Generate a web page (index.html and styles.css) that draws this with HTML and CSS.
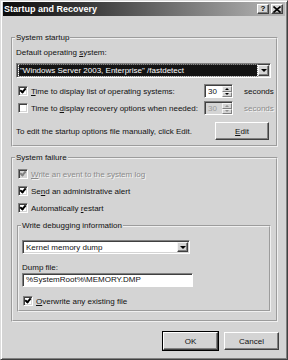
FILE: index.html
```html
<!DOCTYPE html>
<html lang="en">
<head>
<meta charset="UTF-8">
<title>Startup and Recovery</title>
<link rel="stylesheet" href="styles.css">
</head>
<body>
<div class="window">
  <div class="titlebar">
    <span class="title">Startup and Recovery</span>
    <div class="caption-buttons">
      <span class="cbtn help">?</span>
      <span class="cbtn close">
        <svg width="8" height="7" viewBox="0 0 8 7"><path d="M0.5 0.5 L7.5 6.5 M7.5 0.5 L0.5 6.5" stroke="#000" stroke-width="1.6"/></svg>
      </span>
    </div>
  </div>

  <div class="content">
    <fieldset class="group startup">
      <legend>System startup</legend>
      <div class="label">Default operating <u>s</u>ystem:</div>
      <div class="combo">
        <div class="combo-field"><span class="selected">"Windows Server 2003, Enterprise" /fastdetect</span></div>
        <span class="drop"><i class="arrow"></i></span>
      </div>

      <div class="spin-row first">
        <div class="check-item">
          <span class="checkbox checked"></span>
          <span><u>T</u>ime to display list of operating systems:</span>
        </div>
        <div class="spinner">
          <span class="spin-value">30</span>
          <span class="spin-arrows"><span class="up"><i></i></span><span class="down"><i></i></span></span>
        </div>
        <span class="unit">seconds</span>
      </div>

      <div class="spin-row second">
        <div class="check-item">
          <span class="checkbox"></span>
          <span>Time to <u>d</u>isplay recovery options when needed:</span>
        </div>
        <div class="spinner disabled">
          <span class="spin-value">30</span>
          <span class="spin-arrows"><span class="up"><i></i></span><span class="down"><i></i></span></span>
        </div>
        <span class="unit disabled-text">seconds</span>
      </div>

      <div class="edit-row">
        <span>To edit the startup options file manually, click Edit.</span>
        <button class="btn edit"><u>E</u>dit</button>
      </div>
    </fieldset>

    <fieldset class="group failure">
      <legend>System failure</legend>
      <div class="check-item row">
        <span class="checkbox checked disabled"></span>
        <span class="disabled-text"><u>W</u>rite an event to the system log</span>
      </div>
      <div class="check-item row">
        <span class="checkbox checked"></span>
        <span>Se<u>n</u>d an administrative alert</span>
      </div>
      <div class="check-item row">
        <span class="checkbox checked"></span>
        <span>Automatically <u>r</u>estart</span>
      </div>

      <fieldset class="group debug">
        <legend>Write debugging information</legend>
        <div class="combo small">
          <div class="combo-field"><span class="plain">Kernel memory dump</span></div>
          <span class="drop"><i class="arrow"></i></span>
        </div>
        <div class="label dump-label">Dump file:</div>
        <div class="textbox">%SystemRoot%\MEMORY.DMP</div>
        <div class="check-item row overwrite">
          <span class="checkbox checked"></span>
          <span><u>O</u>verwrite any existing file</span>
        </div>
      </fieldset>
    </fieldset>

    <div class="buttons">
      <button class="btn default">OK</button>
      <button class="btn">Cancel</button>
    </div>
  </div>
</div>
</body>
</html>
```

FILE: styles.css
```css
body {
    margin: 0;
    background: #fff;
    font-family: "Liberation Sans", Arial, sans-serif;
    font-size: 8px;
    line-height: 13px;
    color: #111;
}

.window {
    width: 288px;
    height: 360px;
    box-sizing: border-box;
    background: #d4d4d4;
    border: 1px solid;
    border-color: #dcdcdc #404040 #404040 #dcdcdc;
    box-shadow: inset 1px 1px 0 #fff, inset -1px -1px 0 #808080;
    padding: 1px 2px 2px 2px;
}

.titlebar {
    height: 14px;
    display: flex;
    align-items: center;
    background: linear-gradient(to right, #0c0c0c, #3a3a3a 30%, #b8b8b8);
    color: #fff;
    padding-left: 1px;
}

.title {
    font-weight: bold;
    font-size: 9px;
    flex: 1;
}

.caption-buttons {
    display: flex;
    gap: 2px;
    margin-right: 2px;
}

.cbtn {
    width: 12px;
    height: 10px;
    box-sizing: border-box;
    background: #d4d4d4;
    border: 1px solid;
    border-color: #fff #404040 #404040 #fff;
    box-shadow: inset -1px -1px 0 #808080;
    color: #000;
    display: flex;
    align-items: center;
    justify-content: center;
    font-weight: bold;
    font-size: 8px;
    line-height: 8px;
}

.content {
    padding: 0 7px 0 8px;
    display: flex;
    flex-direction: column;
}

.group {
    margin: 0;
    padding: 0 5px 5px 3px;
    border: 2px groove #f0f0f0;
    min-width: 0;
}

.group legend {
    padding: 0 1px;
    margin-left: -1px;
    line-height: 13px;
}

.startup {
    margin-top: 15px;
}

.failure {
    margin-top: 4px;
    padding-bottom: 8px;
}

.debug {
    margin: 4px 0 0 1px;
    padding: 0 5px 2px 3px;
}

.label {
    margin-top: 2px;
}

/* combo boxes */
.combo {
    display: flex;
    height: 15px;
    margin-top: 4px;
    box-sizing: border-box;
    background: #fff;
    border: 1px solid;
    border-color: #808080 #fff #fff #808080;
    box-shadow: inset 1px 1px 0 #404040, inset -1px -1px 0 #d4d4d4;
    padding: 1px;
}

.combo-field {
    flex: 1;
    display: flex;
    align-items: center;
    padding: 0 1px;
    line-height: 11px;
}

.selected {
    flex: 1;
    background: #141414;
    color: #fff;
    padding-left: 1px;
    outline: 1px dotted #888;
}

.plain {
    padding-left: 1px;
}

.drop {
    width: 11px;
    box-sizing: border-box;
    background: #d4d4d4;
    border: 1px solid;
    border-color: #f4f4f4 #404040 #404040 #f4f4f4;
    box-shadow: inset -1px -1px 0 #808080;
    display: flex;
    align-items: center;
    justify-content: center;
}

.arrow {
    width: 0;
    height: 0;
    border-left: 3px solid transparent;
    border-right: 3px solid transparent;
    border-top: 3px solid #000;
}

.combo.small {
    width: 168px;
    height: 14px;
    margin-top: 8px;
}

/* checkboxes */
.check-item {
    display: flex;
    align-items: center;
    gap: 3px;
}

.checkbox {
    width: 10px;
    height: 10px;
    box-sizing: border-box;
    margin-left: 2px;
    background: #fff;
    border: 1px solid;
    border-color: #808080 #fff #fff #808080;
    box-shadow: inset 1px 1px 0 #404040, inset -1px -1px 0 #d4d4d4;
    position: relative;
}

.checkbox.checked::after {
    content: "";
    position: absolute;
    left: 2px;
    top: 0;
    width: 2px;
    height: 4px;
    border: solid #000;
    border-width: 0 2px 2px 0;
    transform: rotate(40deg);
}

.checkbox.disabled {
    background: #d4d4d4;
}

.checkbox.disabled::after {
    border-color: #808080;
}

.disabled-text {
    color: #8a8a8a;
    text-shadow: 1px 1px 0 #f4f4f4;
}

.row {
    height: 14px;
    margin-top: 3px;
}

/* spinner rows */
.spin-row {
    display: grid;
    grid-template-columns: 188px 29px auto;
    align-items: center;
    height: 14px;
}

.spin-row.first {
    margin-top: 6px;
}

.spin-row.second {
    margin-top: 3px;
}

.spinner {
    display: flex;
    height: 14px;
    box-sizing: border-box;
    background: #fff;
    border: 1px solid;
    border-color: #808080 #fff #fff #808080;
    box-shadow: inset 1px 1px 0 #404040;
    padding: 1px 0 0 1px;
}

.spinner.disabled {
    background: #d4d4d4;
    color: #9a9a9a;
}

.spin-value {
    flex: 1;
    padding-left: 2px;
    line-height: 11px;
}

.spin-arrows {
    width: 10px;
    display: flex;
    flex-direction: column;
}

.spin-arrows span {
    flex: 1;
    background: #d4d4d4;
    border: 1px solid;
    border-color: #f4f4f4 #808080 #808080 #f4f4f4;
    display: flex;
    align-items: center;
    justify-content: center;
}

.spin-arrows .up i {
    border-left: 2px solid transparent;
    border-right: 2px solid transparent;
    border-bottom: 2px solid #000;
}

.spin-arrows .down i {
    border-left: 2px solid transparent;
    border-right: 2px solid transparent;
    border-top: 2px solid #000;
}

.spinner.disabled .spin-arrows .up i {
    border-bottom-color: #909090;
}

.spinner.disabled .spin-arrows .down i {
    border-top-color: #909090;
}

.unit {
    margin-left: 11px;
}

/* edit row */
.edit-row {
    display: flex;
    align-items: center;
    justify-content: space-between;
    margin-top: 7px;
}

.btn {
    width: 55px;
    height: 18px;
    box-sizing: border-box;
    background: #d4d4d4;
    border: 1px solid;
    border-color: #fff #404040 #404040 #fff;
    box-shadow: inset -1px -1px 0 #808080;
    font-family: inherit;
    font-size: 8px;
    color: #111;
    padding: 0;
}

.btn.edit {
    width: 54px;
    margin-right: 2px;
}

.btn.default {
    outline: 1px solid #000;
    outline-offset: 0;
    border-color: #fff #404040 #404040 #fff;
}

.dump-label {
    margin-top: 8px;
    line-height: 11px;
}

.textbox {
    width: 171px;
    height: 14px;
    box-sizing: border-box;
    background: #fff;
    border: 1px solid;
    border-color: #808080 #fff #fff #808080;
    box-shadow: inset 1px 1px 0 #404040;
    padding-left: 3px;
    line-height: 12px;
}

.overwrite {
    margin-top: 7px;
}

.overwrite .checkbox {
    margin-left: 1px;
}

.buttons {
    display: flex;
    justify-content: flex-end;
    gap: 6px;
    margin-top: 10px;
    margin-right: -1px;
}
```
